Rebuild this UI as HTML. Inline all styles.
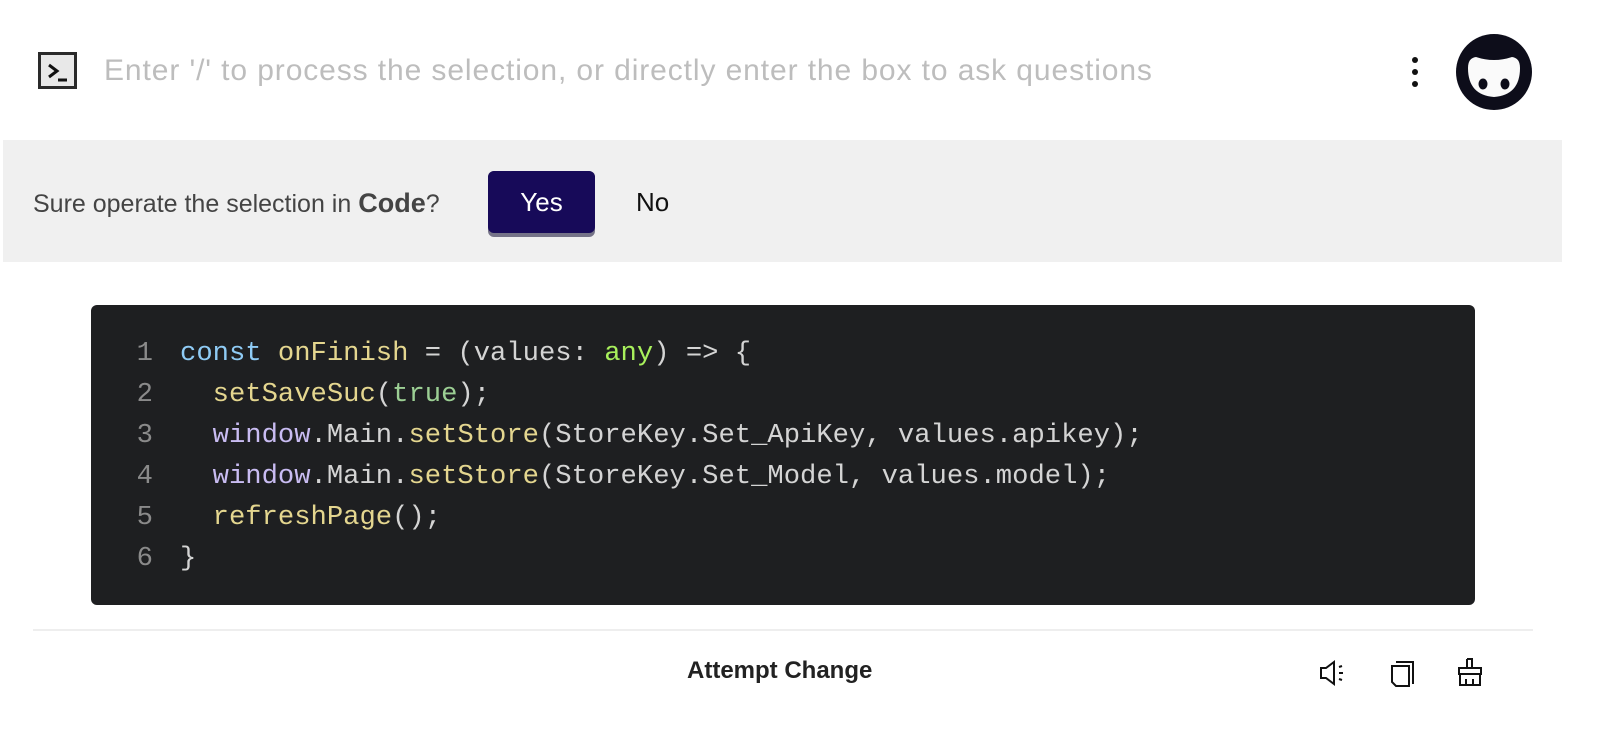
<!DOCTYPE html>
<html><head><meta charset="utf-8"><style>
*{margin:0;padding:0;box-sizing:border-box}
body{width:1609px;height:750px;background:#fff;font-family:"Liberation Sans",sans-serif;position:relative;overflow:hidden}
.abs{position:absolute}
.code{left:91px;top:305px;width:1384px;height:300px;background:#1e1f21;border-radius:6px;font-family:"Liberation Mono",monospace;font-size:27.2px;color:#d4d4d4}
.ln{position:absolute;left:42px;width:20px;text-align:right;color:#8a8a8a}
.cl{position:absolute;left:89px;white-space:pre}
.b{color:#8fcbf5}.y{color:#e4d68f}.g{color:#a8f05c}.t{color:#9ccf94}.p{color:#c9bcf2}
</style></head><body>
<div class="abs" style="left:38px;top:52px;width:39px;height:37px;border:3px solid #2a2a2a;background:#e8e8e8"></div>
<svg class="abs" style="left:38px;top:52px" width="39" height="37"><path d="M11 13 L19 19 L11 25" stroke="#111" stroke-width="3" fill="none"/><path d="M20 28 H29" stroke="#111" stroke-width="3"/></svg>
<div class="abs" style="left:104px;top:54px;font-size:30px;letter-spacing:0.9px;color:#bdbdbd;white-space:nowrap">Enter '/' to process the selection, or directly enter the box to ask questions</div>
<div class="abs" style="left:1412px;top:57px;width:6px;height:6px;border-radius:50%;background:#111"></div>
<div class="abs" style="left:1412px;top:69px;width:6px;height:6px;border-radius:50%;background:#111"></div>
<div class="abs" style="left:1412px;top:81px;width:6px;height:6px;border-radius:50%;background:#111"></div>
<svg class="abs" style="left:1454px;top:33px" width="80" height="78"><circle cx="40" cy="39" r="38" fill="#0d0d1a"/><path d="M14 35 Q14 25 22 24 Q40 30 58 24 Q66 25 66 35 Q66 62 40 64 Q14 62 14 35Z" fill="#fafafa"/><ellipse cx="29" cy="51" rx="4.5" ry="5.5" fill="#0d0d1a"/><ellipse cx="51" cy="51" rx="4.5" ry="5.5" fill="#0d0d1a"/></svg>
<div class="abs" style="left:3px;top:140px;width:1559px;height:122px;background:#f0f0f0"></div>
<div class="abs" style="left:33px;top:188px;font-size:25px;color:#444;white-space:nowrap">Sure operate the selection in <b style="font-size:27px">Code</b>?</div>
<div class="abs" style="left:488px;top:171px;width:107px;height:66px;border-radius:6px;background:#757388"></div>
<div class="abs" style="left:488px;top:171px;width:107px;height:62px;border-radius:6px;background:#170a59;color:#fff;font-size:26px;text-align:center;line-height:62px">Yes</div>
<div class="abs" style="left:636px;top:187px;font-size:26px;color:#111">No</div>
<div class="abs code">
<div class="ln" style="top:33px">1</div><div class="cl" style="top:33px"><span class="b">const</span> <span class="y">onFinish</span> = (values: <span class="g">any</span>) =&gt; {</div>
<div class="ln" style="top:74px">2</div><div class="cl" style="top:74px">  <span class="y">setSaveSuc</span>(<span class="t">true</span>);</div>
<div class="ln" style="top:115px">3</div><div class="cl" style="top:115px">  <span class="p">window</span>.Main.<span class="y">setStore</span>(StoreKey.Set_ApiKey, values.apikey);</div>
<div class="ln" style="top:156px">4</div><div class="cl" style="top:156px">  <span class="p">window</span>.Main.<span class="y">setStore</span>(StoreKey.Set_Model, values.model);</div>
<div class="ln" style="top:197px">5</div><div class="cl" style="top:197px">  <span class="y">refreshPage</span>();</div>
<div class="ln" style="top:238px">6</div><div class="cl" style="top:238px">}</div>
</div>
<div class="abs" style="left:33px;top:629px;width:1500px;height:2px;background:#eee"></div>
<div class="abs" style="left:687px;top:657px;font-size:24px;font-weight:bold;color:#222;white-space:nowrap">Attempt Change</div>
<svg class="abs" style="left:1318px;top:658px" width="30" height="30" fill="none" stroke="#111" stroke-width="2"><path d="M3 10 H8 L16 4 V26 L8 20 H3Z"/><path d="M21 9 L24 8 M21 15 H25 M21 21 L24 22"/></svg>
<svg class="abs" style="left:1388px;top:656px" width="30" height="32" fill="none" stroke="#111" stroke-width="2"><path d="M8 6 H25 V28"/><path d="M4 10 H21 V30 H8 L4 26Z"/></svg>
<svg class="abs" style="left:1455px;top:656px" width="30" height="32" fill="none" stroke="#111" stroke-width="2"><path d="M12 3 H17 V12 M12 3 V12"/><path d="M4 12 H26 V18 H4Z"/><path d="M5 18 V29 H25 V18 M11 23 V29 M18 23 V29"/></svg>
</body></html>
